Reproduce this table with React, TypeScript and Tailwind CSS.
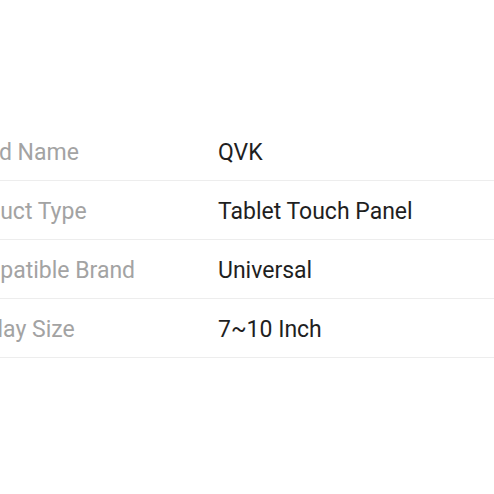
const ROWS = [
  { label: "Brand Name", value: "QVK" },
  { label: "Product Type", value: "Tablet Touch Panel" },
  { label: "Compatible Brand", value: "Universal" },
  { label: "Display Size", value: "7~10 Inch" },
];

export default function App() {
  return (
    <div className="w-[494px] h-[494px] overflow-hidden bg-white font-['Roboto',sans-serif]">
      <div className="pt-[122px] -ml-[48px] w-[542px]">
        {ROWS.map((r) => (
          <div key={r.label} className="flex items-center h-[59px] pt-[4px] border-b border-[#ededed]">
            <div className="w-[266px] shrink-0 text-[23px] text-[#a3a3a3]">{r.label}</div>
            <div className="text-[23px] text-[#1f1f1f]">{r.value}</div>
          </div>
        ))}
      </div>
    </div>
  );
}
